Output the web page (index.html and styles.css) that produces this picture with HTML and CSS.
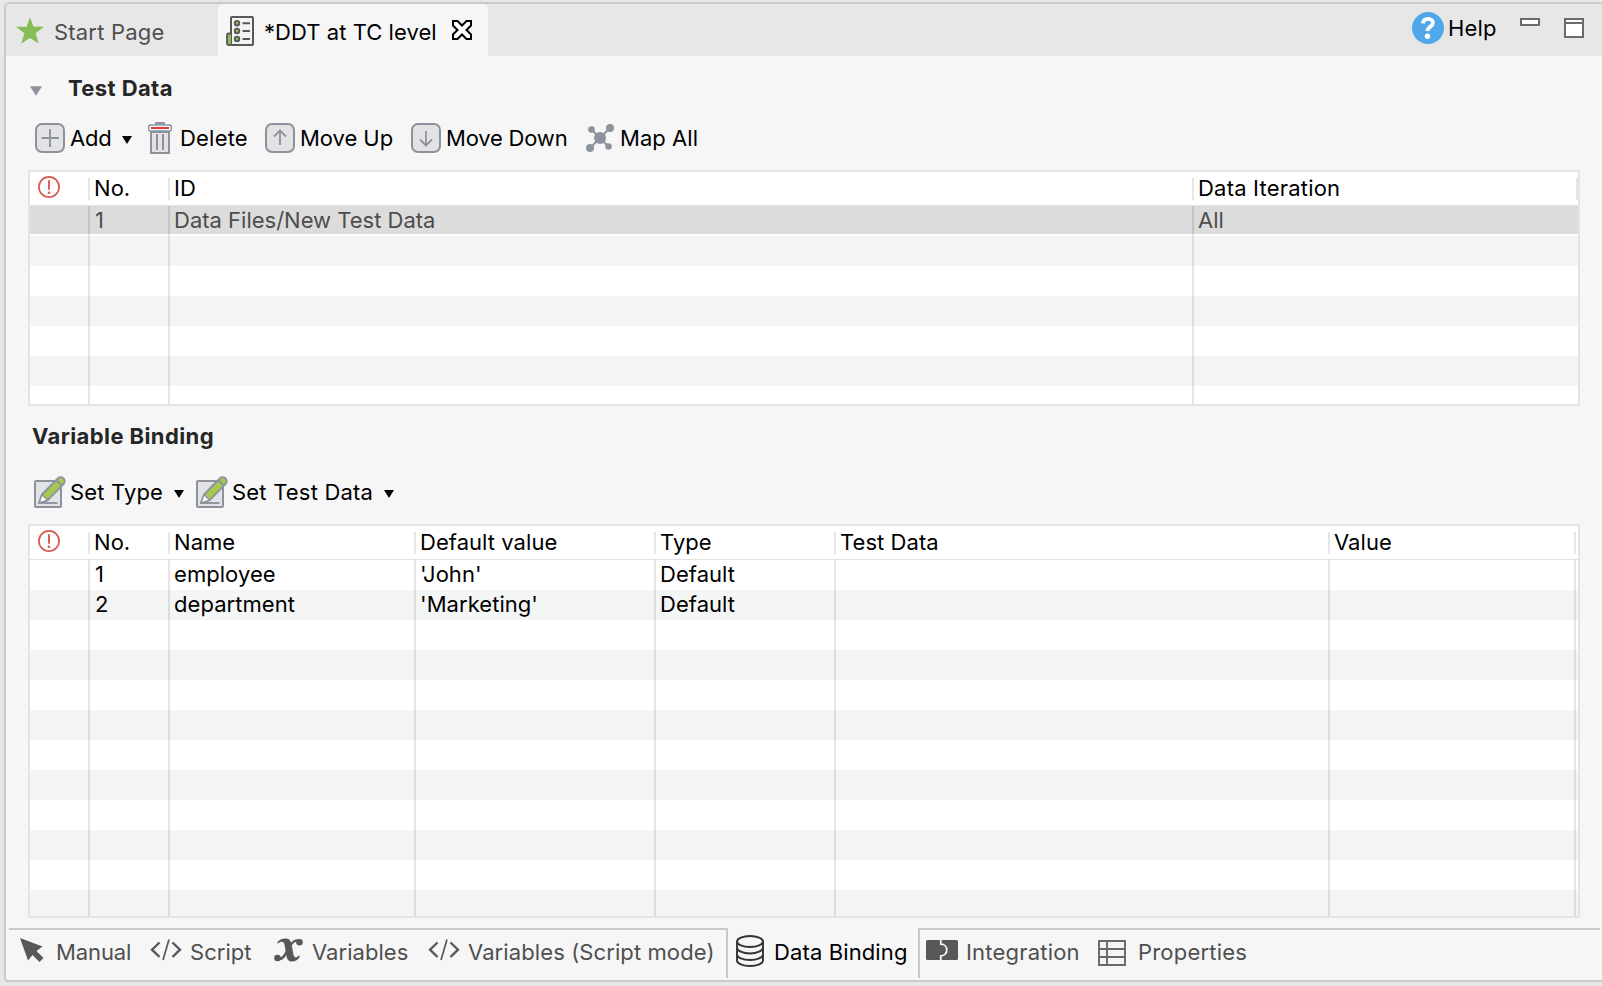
FILE: index.html
```html
<!DOCTYPE html>
<html lang="en">
<head>
<meta charset="utf-8">
<title>DDT at TC level</title>
<link rel="stylesheet" href="styles.css">
</head>
<body>
<svg class="defs" width="0" height="0">
  <symbol id="i-caret" viewBox="0 0 10 8"><path d="M0 0h10L5 8z" fill="currentColor"/></symbol>
  <symbol id="i-alert" viewBox="1 1 22 22"><circle cx="12" cy="12" r="10.1" fill="none" stroke="#d65a4f" stroke-width="1.700"/><path d="M12 5.200v9.600" stroke="#d65a4f" stroke-width="1.900"/><circle cx="12" cy="17.700" r="1.300" fill="#d65a4f"/></symbol>
  <symbol id="i-edit" viewBox="0 0 32 32">
    <rect x="1" y="5" width="26" height="26" rx="1" fill="#e3e2e4" stroke="#8d939d" stroke-width="2"/>
    <path d="M8 18.500L23.800 2.500a4 4 0 0 1 5.700 5.700L13.700 24.200 5 27z" fill="#a4c94f" stroke="#8d939d" stroke-width="1.900" stroke-linejoin="round"/>
    <path d="M8 18.500l5.700 5.700L5 27z" fill="#fff" stroke="#8d939d" stroke-width="1.500" stroke-linejoin="round"/>
    <path d="M22.300 4l5.700 5.700" stroke="#8d939d" stroke-width="1.900"/>
    <path d="M4 27h19.500" stroke="#8d939d" stroke-width="1.900"/>
  </symbol>
  <symbol id="i-code" viewBox="0 0 32 22"><path d="M9.500 3.500L2 10.700l7.500 7.300M22.500 3.500L30 10.700l-7.500 7.300" fill="none" stroke="#58585a" stroke-width="2.400"/><path d="M19 .5L13 21" stroke="#58585a" stroke-width="1.700"/></symbol>
</svg>
<div class="frame">
  <header class="tabbar">
    <div class="tab tab-start">
      <svg width="28" height="27" viewBox="0 0 28 27"><path d="M14 0l3.500 9.800H28l-8.400 6.400 3.100 10.300L14 20.900l-8.700 5.600 3.100-10.300L0 9.800h10.500z" fill="#86bd56"/></svg>
      <span class="t-start">Start Page</span>
    </div>
    <div class="tab tab-active">
      <svg class="doc" width="28" height="30" viewBox="0 0 28 30"><rect x="5" y="1" width="22" height="28" rx="1" fill="#f4f4f4" stroke="#58585a" stroke-width="2"/><path d="M5 17.500H2.500Q1 17.500 1 19v8.500Q1 29 2.500 29H5" fill="#86bd56" stroke="#58585a" stroke-width="1.800"/><g fill="#86bd56" stroke="#58585a" stroke-width="1.800"><circle cx="11" cy="7.200" r="2.300"/><circle cx="11" cy="15" r="2.300"/><circle cx="11" cy="22.900" r="2.300"/></g><path d="M16.500 7.200H24M16.500 15H24M16.500 22.900H24" stroke="#58585a" stroke-width="2"/></svg>
      <span class="t-ddt">*DDT at TC level</span>
      <svg class="close" width="20" height="20" viewBox="0 0 20 20"><path d="M1 1h4.500L10 5.500 14.500 1H19v4.500L14.500 10l4.500 4.500V19h-4.500L10 14.500 5.500 19H1v-4.500L5.500 10 1 5.500z" fill="#fff" stroke="#000" stroke-width="2"/></svg>
    </div>
    <div class="window-tools">
      <svg width="32" height="32" viewBox="0 0 32 32"><circle cx="16" cy="16" r="16" fill="#50a8eb"/><path d="M10.800 11.400C11.300 8.200 13.300 6.900 16 6.900c3 0 4.900 1.700 4.900 4 0 3.900-5.400 3.700-5.400 8" fill="none" stroke="#fff" stroke-width="3.800"/><circle cx="15.500" cy="24.300" r="2.700" fill="#fff"/></svg>
      <span class="t-help">Help</span>
      <svg class="min" width="20" height="8" viewBox="0 0 20 8"><rect x="1" y="1" width="18" height="6" fill="#fff" stroke="#6a6a6a" stroke-width="2"/></svg>
      <svg class="max" width="20" height="20" viewBox="0 0 20 20"><path d="M1 1h18v18H1zM1 5h18" fill="#fff" stroke="#6a6a6a" stroke-width="2"/></svg>
    </div>
  </header>

  <main class="content">
    <h2 class="section"><svg class="fold" width="12" height="10"><use href="#i-caret"/></svg><span class="t-td">Test Data</span></h2>
    <div class="toolbar">
      <button class="tool w-add"><svg width="30" height="30" viewBox="0 0 30 30"><rect x="1" y="1" width="28" height="28" rx="6" fill="#e3e2e4" stroke="#8d939d" stroke-width="2"/><path d="M6.500 15h17.500M15 6v18" stroke="#8d939d" stroke-width="1.900"/></svg><span class="t-add">Add</span><svg class="caret" width="10" height="8"><use href="#i-caret"/></svg></button>
      <button class="tool w-del"><svg width="24" height="32" viewBox="0 0 24 32"><path d="M3 10h18v21H3z" fill="#e3e2e4" stroke="#8d939d" stroke-width="2"/><path d="M9 12v16M15 12v16" stroke="#8d939d" stroke-width="2"/><path d="M7 1.200h10" stroke="#8d939d" stroke-width="2.400"/><rect x=".8" y="3" width="22.400" height="6" rx="1" fill="#fff" stroke="#8d939d" stroke-width="1.500"/><path d="M3 6h18" stroke="#e8392e" stroke-width="2.200"/></svg><span class="t-del">Delete</span></button>
      <button class="tool w-up"><svg width="30" height="30" viewBox="0 0 30 30"><rect x="1" y="1" width="28" height="28" rx="6" fill="#e3e2e4" stroke="#8d939d" stroke-width="2"/><path d="M15 22V8M9 13.500l6-6 6 6" fill="none" stroke="#8d939d" stroke-width="1.800"/></svg><span class="t-up">Move Up</span></button>
      <button class="tool w-down"><svg width="30" height="30" viewBox="0 0 30 30"><rect x="1" y="1" width="28" height="28" rx="6" fill="#e3e2e4" stroke="#8d939d" stroke-width="2"/><path d="M15 8v14M9 16.500l6 6 6-6" fill="none" stroke="#8d939d" stroke-width="1.800"/></svg><span class="t-down">Move Down</span></button>
      <button class="tool w-map"><svg width="28" height="28" viewBox="0 0 28 28"><g fill="#8d939d"><path d="M5 5l18 18M24 4L4 24" stroke="#8d939d" stroke-width="2"/><circle cx="14" cy="14" r="6"/><circle cx="5.500" cy="5.500" r="3.300"/><circle cx="24" cy="4" r="4"/><circle cx="4" cy="24" r="4"/><circle cx="22.500" cy="22.500" r="3.300"/></g></svg><span class="t-map">Map All</span></button>
    </div>

    <div class="table table-data">
      <div class="thead cols-data"><span class="mark"><svg width="22" height="22"><use href="#i-alert"/></svg></span><span class="t-no">No.</span><span>ID</span><span class="t-iter">Data Iteration</span><span></span></div>
      <div class="tbody">
        <div class="row cols-data selected"><span></span><span>1</span><span class="t-file">Data Files/New Test Data</span><span>All</span></div>
        <div class="row cols-data alt"><span></span><span></span><span></span><span></span></div>
        <div class="row cols-data"><span></span><span></span><span></span><span></span></div>
        <div class="row cols-data alt"><span></span><span></span><span></span><span></span></div>
        <div class="row cols-data"><span></span><span></span><span></span><span></span></div>
        <div class="row cols-data alt"><span></span><span></span><span></span><span></span></div>
        <div class="row cols-data"><span></span><span></span><span></span><span></span></div>
      </div>
    </div>

    <h2 class="section section-binding"><span class="t-vb">Variable Binding</span></h2>
    <div class="toolbar toolbar-binding">
      <button class="tool w-type"><svg class="edit" width="32" height="32"><use href="#i-edit"/></svg><span class="t-type">Set Type</span><svg class="caret" width="10" height="8"><use href="#i-caret"/></svg></button>
      <button class="tool w-setdata"><svg class="edit" width="32" height="32"><use href="#i-edit"/></svg><span class="t-setdata">Set Test Data</span><svg class="caret" width="10" height="8"><use href="#i-caret"/></svg></button>
    </div>

    <div class="table table-vars">
      <div class="thead cols-vars"><span class="mark"><svg width="22" height="22"><use href="#i-alert"/></svg></span><span class="t-no">No.</span><span>Name</span><span>Default value</span><span>Type</span><span>Test Data</span><span>Value</span><span></span></div>
      <div class="tbody">
        <div class="row cols-vars"><span></span><span>1</span><span>employee</span><span>'John'</span><span>Default</span><span></span><span></span><span></span></div>
        <div class="row cols-vars alt"><span></span><span>2</span><span>department</span><span>'Marketing'</span><span>Default</span><span></span><span></span><span></span></div>
        <div class="row cols-vars"><span></span><span></span><span></span><span></span><span></span><span></span><span></span><span></span></div>
        <div class="row cols-vars alt"><span></span><span></span><span></span><span></span><span></span><span></span><span></span><span></span></div>
        <div class="row cols-vars"><span></span><span></span><span></span><span></span><span></span><span></span><span></span><span></span></div>
        <div class="row cols-vars alt"><span></span><span></span><span></span><span></span><span></span><span></span><span></span><span></span></div>
        <div class="row cols-vars"><span></span><span></span><span></span><span></span><span></span><span></span><span></span><span></span></div>
        <div class="row cols-vars alt"><span></span><span></span><span></span><span></span><span></span><span></span><span></span><span></span></div>
        <div class="row cols-vars"><span></span><span></span><span></span><span></span><span></span><span></span><span></span><span></span></div>
        <div class="row cols-vars alt"><span></span><span></span><span></span><span></span><span></span><span></span><span></span><span></span></div>
        <div class="row cols-vars"><span></span><span></span><span></span><span></span><span></span><span></span><span></span><span></span></div>
        <div class="row cols-vars alt"><span></span><span></span><span></span><span></span><span></span><span></span><span></span><span></span></div>
      </div>
    </div>
  </main>

  <nav class="pages">
    <div class="pages-left">
      <div class="page p-manual"><svg width="26" height="26" viewBox="0 0 26 26"><path d="M1 1l22.500 8.500-6 4.500 7 7-4 4-7-7-4.500 5.500z" fill="#58585a"/></svg><span>Manual</span></div>
      <div class="page p-script"><svg width="32" height="22"><use href="#i-code"/></svg><span>Script</span></div>
      <div class="page p-vars"><svg width="29" height="24" viewBox="0 0 29 24"><path d="M3 5C5 1.500 8 .5 11 .5c5 0 6 2.500 7 8l1.300 7.500c.7 4 2.700 4.500 5.700 1.500l1 .7c-2 3.700-4.500 5.300-8 5.300-4 0-5-2.500-5.800-6.500L10.700 7.500C10 3.500 8 2.700 3.800 5.500z" fill="#58585a"/><path d="M25 2.600c-5-1.500-8 3-10.500 7.900S9 22.500 4 20.800" fill="none" stroke="#58585a" stroke-width="2.400"/><circle cx="25.500" cy="4.200" r="3.300" fill="#58585a"/><circle cx="3.500" cy="20" r="3.300" fill="#58585a"/></svg><span>Variables</span></div>
      <div class="page p-varscript"><svg width="32" height="22"><use href="#i-code"/></svg><span class="t-vs">Variables (Script mode)</span></div>
    </div>
    <div class="page p-binding"><svg width="28" height="32" viewBox="0 0 28 32"><g fill="none" stroke="#333" stroke-width="1.900"><ellipse cx="14" cy="6.500" rx="13" ry="5.500"/><path d="M1 6.500v19c0 3 5.800 5.500 13 5.500s13-2.500 13-5.500v-19M1 12.500c0 3 5.800 6 13 6s13-3 13-6M1 19.500c0 3 5.800 5.500 13 5.500s13-2.500 13-5.500"/></g></svg><span>Data Binding</span></div>
    <div class="pages-right">
      <div class="page p-integ"><svg width="32" height="20" viewBox="0 0 32 20"><rect width="32" height="20" rx="1.500" fill="#58585a"/><path d="M14.800 0v4.200c8 0 8 11.600 0 11.600V20" fill="none" stroke="#f6f6f6" stroke-width="1.800"/></svg><span>Integration</span></div>
      <div class="page p-props"><svg width="28" height="26" viewBox="0 0 28 26"><path d="M1 1h26v24H1zM1 9h26M1 17h26M9 1v24" fill="none" stroke="#68686a" stroke-width="1.900"/></svg><span>Properties</span></div>
    </div>
  </nav>
</div>
</body>
</html>
```
FILE: styles.css
```css
* { box-sizing: border-box; }
body {
  margin: 0;
  height: 986px;
  overflow: hidden;
  background: #e7e7e7;
  font-family: Inter, "Liberation Sans", sans-serif;
  font-size: 22px;
  line-height: 28px;
  letter-spacing: 0.05px;
  color: #000;
}
svg { display: block; flex: none; }
span { white-space: nowrap; }
.defs { position: absolute; }
.frame {
  display: flex;
  flex-direction: column;
  margin: 2px 0 0 4px;
  height: 980px;
  border: 2px solid #c9c9c9;
  border-right: 0;
  border-radius: 6px 3px 0 4px;
  background: #f6f6f6;
  overflow: hidden;
}

/* Editor tabs */
.tabbar { display: flex; height: 52px; background: #e7e7e7; }
.tab { display: flex; align-items: center; padding-top: 4px; }
.tab-start { width: 212px; padding-left: 10px; gap: 10px; color: #4f4f4f; }
.tab-start svg { margin-bottom: 4px; }
.t-start { letter-spacing: 0.2px; }
.tab-active { width: 270px; padding-left: 8px; background: #f6f6f6; border-radius: 5px 5px 0 0; }
.tab-active .doc { margin-bottom: 2px; }
.t-ddt { width: 173px; margin-left: 10px; }
.close { margin: 0 0 4px 15px; }
.window-tools { display: flex; align-items: flex-start; margin-left: auto; padding: 8px 18px 0 0; }
.t-help { width: 54px; margin: 2px 0 0 4px; letter-spacing: 0.2px; }
.min { margin: 6px 0 0 18px; }
.max { margin: 6px 0 0 24px; }

/* Sections */
.content { flex: none; padding-left: 22px; height: 872px; }
.section { display: flex; align-items: center; margin: 0; height: 64px; font-size: 22px; font-weight: 700; letter-spacing: 0.4px; color: #262626; }
.fold { margin: 5px 26px 0 2px; color: #8d939d; }
.section-binding { height: 60px; padding-left: 4px; }
.toolbar { display: flex; align-items: center; height: 36px; padding-left: 7px; margin-bottom: 14px; }
.toolbar-binding { margin-top: 8px; padding-left: 6px; }
.tool { display: flex; align-items: center; height: 36px; padding: 0; border: 0; background: none; font: inherit; letter-spacing: inherit; color: #000; }
.w-add { width: 113px; }
.t-add, .t-type, .t-setdata { text-align: left; }
.t-add { width: 46px; margin-left: 5px; letter-spacing: -0.2px; }
.caret { margin: 3px 0 0 6px; }
.w-del { width: 117px; }
.t-del { margin-left: 8px; letter-spacing: 0.2px; }
.w-up { width: 146px; }
.t-up, .t-down { margin-left: 5px; }
.t-up { letter-spacing: -0.05px; }
.t-down { letter-spacing: -0.2px; }
.w-down { width: 175px; }
.t-map { margin-left: 6px; }
.w-type { width: 162px; }
.t-type { width: 98px; margin-left: 4px; letter-spacing: 0.15px; }
.t-setdata { width: 146px; margin-left: 4px; letter-spacing: 0.2px; }

/* Tables */
.table { width: 1552px; border: 2px solid #e4e4e4; background: #fff; overflow: hidden; }
.table-data { height: 236px; }
.table-vars { height: 394px; }
.cols-data { display: grid; grid-template-columns: 58px 80px 1024px 384px 2px; }
.cols-vars { display: grid; grid-template-columns: 58px 80px 246px 240px 180px 494px 246px 4px; }
.thead { height: 34px; padding: 6px 0 5px; border-bottom: 1px solid #e2e2e2; }
.thead span { height: 22px; padding-left: 4px; line-height: 21px; border-left: 2px solid #e6e6e6; letter-spacing: 0.05px; }
.thead .t-iter { letter-spacing: 0.2px; }
.thead span:last-child, .row span:last-child:empty { padding-left: 0; }
.thead .mark, .row span:first-child { border-left: 0; }
.thead .mark { padding: 0; margin: -2px 0 0 8px; }
.row { height: 30px; }
.row span { padding-left: 4px; line-height: 28px; border-left: 2px solid rgba(0, 0, 0, 0.1); }
.row span:nth-child(2) { padding-left: 5px; }
.alt { background: #f4f5f5; }
.selected { background: linear-gradient(#dcdcdc 28px, #fff 28px); color: #4d4d4d; }
.row .t-file { letter-spacing: 0; }

/* Page switcher */
.pages { display: flex; height: 50px; color: #4f4f4f; }
.pages-left { display: flex; width: 719px; margin-left: 3px; border-top: 2px solid #c9c9c9; border-right: 2px solid #c9c9c9; }
.pages-right { display: flex; flex: 1; margin-right: 2px; border-top: 2px solid #c9c9c9; border-left: 2px solid #c9c9c9; letter-spacing: 0.2px; }
.page { display: flex; align-items: center; height: 44px; }
.page svg { margin-bottom: 4px; }
.p-manual { padding-left: 10px; width: 141px; gap: 11px; letter-spacing: -0.1px; }
.p-script { width: 124px; gap: 8px; }
.p-vars { width: 154px; gap: 9px; }
.p-varscript { gap: 8px; letter-spacing: 0.1px; }
.p-binding { width: 190px; height: 48px; padding: 0 0 0 8px; gap: 10px; letter-spacing: 0.12px; color: #000; }
.p-binding svg { margin-bottom: 3px; }
.p-integ { width: 172px; padding-left: 6px; gap: 8px; }
.p-props { padding-left: 6px; gap: 12px; }
.p-props svg { margin: 2px 0 0; }
```
